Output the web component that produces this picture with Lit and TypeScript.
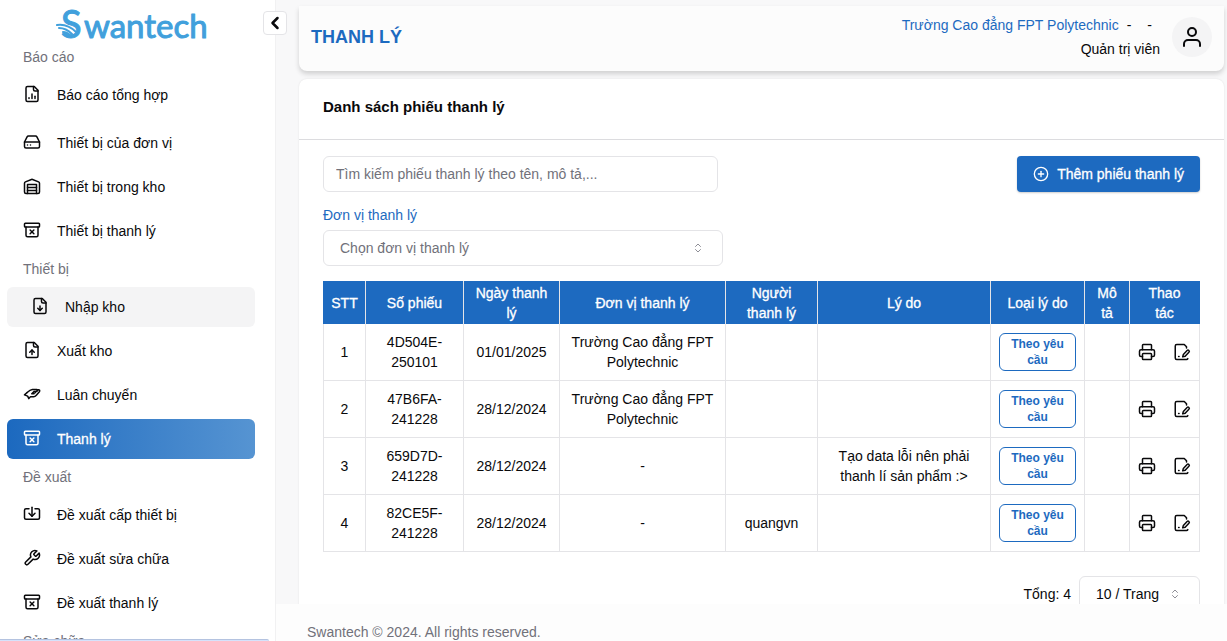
import { LitElement, html, svg, css } from "lit";
import { customElement } from "lit/decorators.js";
import { classMap } from "lit/directives/class-map.js";

const glyphs = {
  report: svg`<path d="M15 2H6a2 2 0 0 0-2 2v16a2 2 0 0 0 2 2h12a2 2 0 0 0 2-2V7Z"/><path d="M14 2v4a2 2 0 0 0 2 2h4"/><path d="M8 18v-1"/><path d="M12 18v-6"/><path d="M16 18v-3"/>`,
  drive: svg`<path d="M22 12H2"/><path d="M5.45 5.11 2 12v6a2 2 0 0 0 2 2h16a2 2 0 0 0 2-2v-6l-3.45-6.89A2 2 0 0 0 16.76 4H7.24a2 2 0 0 0-1.79 1.11z"/><path d="M6 16h.01"/><path d="M10 16h.01"/>`,
  warehouse: svg`<path d="M22 8.35V20a2 2 0 0 1-2 2H4a2 2 0 0 1-2-2V8.35A2 2 0 0 1 3.26 6.5l8-3.2a2 2 0 0 1 1.48 0l8 3.2A2 2 0 0 1 22 8.35Z"/><path d="M6 18h12"/><path d="M6 14h12"/><path d="M6 22V10h12v12"/>`,
  archive: svg`<rect width="20" height="5" x="2" y="3" rx="1"/><path d="M4 8v11a2 2 0 0 0 2 2h12a2 2 0 0 0 2-2V8"/><path d="m9.5 17 5-5"/><path d="m9.5 12 5 5"/>`,
  fileDown: svg`<path d="M15 2H6a2 2 0 0 0-2 2v16a2 2 0 0 0 2 2h12a2 2 0 0 0 2-2V7Z"/><path d="M14 2v4a2 2 0 0 0 2 2h4"/><path d="M12 18v-6"/><path d="m9 15 3 3 3-3"/>`,
  fileUp: svg`<path d="M15 2H6a2 2 0 0 0-2 2v16a2 2 0 0 0 2 2h12a2 2 0 0 0 2-2V7Z"/><path d="M14 2v4a2 2 0 0 0 2 2h4"/><path d="M12 12v6"/><path d="m15 15-3-3-3 3"/>`,
  hand: svg`<path d="M5.500 10 2 13.200l4.200 1.600 1.600 3.400 2.200-2.700h4.200c1.600 0 2.600-.8 3.600-1.900l4-4.600c1.200-1.500.2-3-1.700-2.600l-4.400 4.200"/><path d="M5.500 10c2.600-2.400 4.600-3.800 7-4h6c1.600 0 1.400 2-.2 2.200l-3.300.3-3.300 3.200h3"/>`,
  tray: svg`<path d="M12 3v12"/><path d="m8 11 4 4 4-4"/><path d="M8 5H4a2 2 0 0 0-2 2v10a2 2 0 0 0 2 2h16a2 2 0 0 0 2-2V7a2 2 0 0 0-2-2h-4"/>`,
  wrench: svg`<path d="M14.7 6.3a1 1 0 0 0 0 1.4l1.6 1.6a1 1 0 0 0 1.4 0l3.77-3.77a6 6 0 0 1-7.94 7.94l-6.91 6.91a2.12 2.12 0 0 1-3-3l6.91-6.91a6 6 0 0 1 7.94-7.94l-3.76 3.76z"/>`,
  user: svg`<circle cx="12" cy="7" r="4"/><path d="M20 21v-2a4 4 0 0 0-4-4H8a4 4 0 0 0-4 4v2"/>`,
  plus: svg`<circle cx="12" cy="12" r="10"/><path d="M8 12h8"/><path d="M12 8v8"/>`,
  left: svg`<path d="m15 18-6-6 6-6"/>`,
  sort: svg`<path d="m7 15 5 5 5-5"/><path d="m7 9 5-5 5 5"/>`,
  printer: svg`<path d="M6 18H4a2 2 0 0 1-2-2v-5a2 2 0 0 1 2-2h16a2 2 0 0 1 2 2v5a2 2 0 0 1-2 2h-2"/><path d="M6 9V3a1 1 0 0 1 1-1h10a1 1 0 0 1 1 1v6"/><rect x="6" y="14" width="12" height="8" rx="1"/>`,
  edit: svg`<path d="M18 6.500V5l-3-3H5a2 2 0 0 0-2 2v16a2 2 0 0 0 2 2h13a2 2 0 0 0 1.800-1.200"/><path d="M21.200 12.300a1.400 1.400 0 0 0-2.400-2.400l-5 5.300-.9 3.300 3.300-.9z"/><path d="M7.500 18h.6"/>`,
};

type Glyph = keyof typeof glyphs;

const icon = (name: Glyph, kind = "icon") => html`
  <svg class=${kind} viewBox="0 0 24 24" aria-hidden="true">${glyphs[name]}</svg>
`;

interface Item {
  icon: Glyph;
  label: string;
  state?: "active" | "hover";
}

const menu: { title: string; blocks: Item[][] }[] = [
  {
    title: "Báo cáo",
    blocks: [
      [{ icon: "report", label: "Báo cáo tổng hợp" }],
      [
        { icon: "drive", label: "Thiết bị của đơn vị" },
        { icon: "warehouse", label: "Thiết bị trong kho" },
        { icon: "archive", label: "Thiết bị thanh lý" },
      ],
    ],
  },
  {
    title: "Thiết bị",
    blocks: [
      [
        { icon: "fileDown", label: "Nhập kho", state: "hover" },
        { icon: "fileUp", label: "Xuất kho" },
        { icon: "hand", label: "Luân chuyển" },
        { icon: "archive", label: "Thanh lý", state: "active" },
      ],
    ],
  },
  {
    title: "Đề xuất",
    blocks: [
      [
        { icon: "tray", label: "Đề xuất cấp thiết bị" },
        { icon: "wrench", label: "Đề xuất sửa chữa" },
        { icon: "archive", label: "Đề xuất thanh lý" },
      ],
    ],
  },
  { title: "Sửa chữa", blocks: [] },
];

const base = css`
  * {
    box-sizing: border-box;
  }
  button,
  input,
  select {
    font: inherit;
    color: inherit;
    margin: 0;
  }
  .icon {
    width: 18px;
    height: 18px;
    flex: none;
    fill: none;
    stroke: currentColor;
    stroke-width: 2;
    stroke-linecap: round;
    stroke-linejoin: round;
  }
`;

@customElement("side-menu")
class SideMenu extends LitElement {
  static styles = [
    base,
    css`
      :host {
        display: flex;
        flex-direction: column;
        overflow: hidden;
        background: #fff;
        border-right: 1px solid #f1f1f2;
        padding: 8px 20px 0 7px;
      }
      .logo {
        width: 152px;
        height: 36px;
        margin: 0 0 -5px 49px;
        flex: none;
        overflow: visible;
        fill: #41a0dc;
        stroke: #41a0dc;
        stroke-width: 1;
        stroke-linejoin: round;
        stroke-linecap: round;
        font-family: Lato, sans-serif;
      }
      .swoosh {
        fill: none;
        stroke-width: 2;
      }
      .title {
        margin: 0;
        padding: 8px 16px;
        font-size: 14px;
        font-weight: 400;
        line-height: 20px;
        color: #71717a;
      }
      .blocks {
        display: grid;
        gap: 8px;
      }
      .block {
        display: grid;
        gap: 4px;
        margin: 0;
        padding: 0;
        list-style: none;
      }
      .item {
        display: flex;
        align-items: center;
        gap: 16px;
        height: 40px;
        padding: 0 16px;
        border-radius: 6px;
        color: #09090b;
        text-decoration: none;
      }
      .item .icon {
        margin-bottom: 2px;
      }
      .hover {
        background: #f4f4f5;
        padding-left: 24px;
      }
      .active {
        color: #fff;
        background: linear-gradient(90deg, #1c69bf, #5694d2);
        -webkit-text-stroke: 0.3px currentColor;
      }
    `,
  ];

  render() {
    return html`
      <svg class="logo" viewBox="0 0 152 36" role="img" aria-label="Swantech">
        <text x="5" y="30" font-size="38">S</text>
        <text x="28" y="30" font-size="33">wantech</text>
        <path class="swoosh" d="M1 17c7-1 13 1 19 7M3 20c6 0 9 2 13 6M7 24c3 0 6 2 8 4" />
      </svg>
      <nav>
        ${menu.map(
          (group) => html`
            <h2 class="title">${group.title}</h2>
            <div class="blocks">
              ${group.blocks.map(
                (block) => html`<ul class="block">
                  ${block.map(
                    (item) => html`<li>
                      <a
                        href="#"
                        class=${classMap({
                          item: true,
                          hover: item.state === "hover",
                          active: item.state === "active",
                        })}
                        >${icon(item.icon)}<span>${item.label}</span></a
                      >
                    </li>`
                  )}
                </ul>`
              )}
            </div>
          `
        )}
      </nav>
    `;
  }
}

interface Row {
  code: string;
  date: string;
  unit: string;
  person: string;
  reason: string;
}

const rows: Row[] = [
  { code: "4D504E-250101", date: "01/01/2025", unit: "Trường Cao đẳng FPT Polytechnic", person: "", reason: "" },
  { code: "47B6FA-241228", date: "28/12/2024", unit: "Trường Cao đẳng FPT Polytechnic", person: "", reason: "" },
  { code: "659D7D-241228", date: "28/12/2024", unit: "-", person: "", reason: "Tạo data lỗi nên phải thanh lí sản phẩm :>" },
  { code: "82CE5F-241228", date: "28/12/2024", unit: "-", person: "quangvn", reason: "" },
];

const columns = [
  { label: "STT", width: 42 },
  { label: "Số phiếu", width: 98 },
  { label: "Ngày thanh lý", width: 96 },
  { label: "Đơn vị thanh lý", width: 166 },
  { label: "Người thanh lý", width: 92 },
  { label: "Lý do", width: 173 },
  { label: "Loại lý do", width: 94 },
  { label: "Mô tả", width: 45 },
  { label: "Thao tác", width: 70 },
];

@customElement("liquidation-table")
class LiquidationTable extends LitElement {
  static styles = [
    base,
    css`
      :host {
        display: block;
      }
      table {
        width: 100%;
        table-layout: fixed;
        border-collapse: collapse;
        line-height: 20px;
        text-align: center;
      }
      th {
        height: 42px;
        padding: 0 8px;
        font-weight: 500;
        -webkit-text-stroke: 0.3px currentColor;
        color: #fff;
        background: #1d6ac0;
        border: 1px solid #e4e4e7;
        border-top-color: #1d6ac0;
        border-bottom: 0;
      }
      th:first-child {
        padding: 0 4px;
        border-left-color: #1d6ac0;
      }
      th:last-child {
        border-right-color: #1d6ac0;
      }
      td {
        height: 57px;
        padding: 8px;
        border: 1px solid #e4e4e7;
      }
      tbody tr:first-child td {
        border-top: 0;
      }
      .badge {
        display: block;
        width: 100%;
        padding: 2px 10px;
        border: 1px solid #1d6ac0;
        border-radius: 6px;
        color: #1d6ac0;
        font-size: 12px;
        font-weight: 600;
        line-height: 16px;
      }
      td.type {
        padding: 0 8px;
      }
      .actions {
        display: flex;
        justify-content: space-between;
      }
      .action {
        display: flex;
        padding: 0;
        border: 0;
        background: none;
      }
    `,
  ];

  render() {
    return html`
      <table>
        <colgroup>
          ${columns.map((c) => html`<col style="width:${c.width}px" />`)}
        </colgroup>
        <thead>
          <tr>
            ${columns.map((c) => html`<th scope="col">${c.label}</th>`)}
          </tr>
        </thead>
        <tbody>
          ${rows.map(
            (r, i) => html`<tr>
              <td>${i + 1}</td>
              <td>${r.code}</td>
              <td>${r.date}</td>
              <td>${r.unit}</td>
              <td>${r.person}</td>
              <td>${r.reason}</td>
              <td class="type"><span class="badge">Theo yêu cầu</span></td>
              <td></td>
              <td>
                <div class="actions">
                  <button class="action" aria-label="In phiếu">${icon("printer")}</button>
                  <button class="action" aria-label="Chỉnh sửa">${icon("edit")}</button>
                </div>
              </td>
            </tr>`
          )}
        </tbody>
      </table>
    `;
  }
}

@customElement("app-root")
class AppRoot extends LitElement {
  static styles = [
    base,
    css`
      :host {
        display: grid;
        grid-template-columns: 276px minmax(0, 1fr);
        grid-template-rows: 100vh;
        position: relative;
        overflow: hidden;
        font-family: "Liberation Sans", Arial, sans-serif;
        font-size: 14px;
        line-height: 20px;
        color: #09090b;
        background: #fdfdfd;
      }
      .toggle {
        position: absolute;
        left: 263px;
        top: 11px;
        z-index: 2;
        display: grid;
        place-items: center;
        width: 24px;
        height: 24px;
        padding: 0;
        border: 1px solid #e4e4e7;
        border-radius: 4px;
        background: #fff;
      }
      .toggle .icon {
        width: 20px;
        height: 20px;
        stroke-width: 3;
      }
      .main {
        display: flex;
        flex-direction: column;
      }
      .page {
        flex: 1;
        min-height: 0;
        overflow: hidden;
        padding: 6px 3px 0 23px;
        background: #f8f8f9;
      }
      .header {
        display: flex;
        align-items: center;
        justify-content: space-between;
        height: 65px;
        padding: 0 12px 4px;
        border-radius: 0 0 8px 8px;
        background: #fcfcfc;
        box-shadow: 0 3px 5px rgba(0, 0, 0, 0.16);
      }
      .heading {
        margin: 0;
        font-size: 18px;
        font-weight: 700;
        color: #1d6ac0;
      }
      .account {
        display: flex;
        align-items: center;
        gap: 12px;
      }
      .who {
        line-height: 24px;
        text-align: right;
      }
      .org {
        display: flex;
        gap: 8px;
        padding-right: 8px;
      }
      .org span + span {
        padding-left: 8px;
      }
      .org .school {
        color: #1d6ac0;
      }
      .org .school + span {
        padding-left: 0;
      }
      .avatar {
        display: grid;
        place-items: center;
        width: 40px;
        height: 40px;
        padding: 0;
        border: 0;
        border-radius: 50%;
        background: #f4f4f5;
      }
      .avatar-icon {
        width: 24px;
        height: 24px;
        fill: none;
        stroke: currentColor;
        stroke-width: 2;
        stroke-linecap: round;
      }
      .card {
        margin-top: 8px;
        border-radius: 8px;
        background: #fff;
        box-shadow: 0 0 2px rgba(0, 0, 0, 0.1);
      }
      .card-title {
        margin: 0;
        padding: 16px 24px 20px;
        border-bottom: 1px solid #dcdcdf;
        font-size: 15px;
        font-weight: 600;
        line-height: 24px;
      }
      .body {
        padding: 16px 24px 24px;
      }
      .toolbar {
        display: flex;
        justify-content: space-between;
      }
      .search {
        width: 45%;
        height: 36px;
        padding: 0 12px;
        border: 1px solid #e4e4e7;
        border-radius: 6px;
        background: #fff;
      }
      .search::placeholder {
        color: #71717a;
        opacity: 1;
      }
      .add {
        display: flex;
        align-items: center;
        gap: 8px;
        height: 36px;
        padding: 0 16px;
        border: 0;
        border-radius: 4px;
        color: #fff;
        background: #1d6ac0;
        -webkit-text-stroke: 0.3px currentColor;
        box-shadow: 0 1px 2px rgba(0, 0, 0, 0.2);
      }
      .add-icon,
      .sort-icon {
        width: 16px;
        height: 16px;
        fill: none;
        stroke: currentColor;
        stroke-width: 2;
        stroke-linecap: round;
        stroke-linejoin: round;
      }
      .label {
        display: block;
        margin: 12px 0 4px;
        line-height: 22px;
        color: #1d6ac0;
      }
      .select {
        display: grid;
        align-items: center;
        max-width: 400px;
      }
      .select > * {
        grid-area: 1 / 1;
      }
      .select select {
        width: 100%;
        height: 36px;
        padding: 0 16px;
        border: 1px solid #e4e4e7;
        border-radius: 6px;
        background: #fff;
        appearance: none;
      }
      .select .empty {
        color: #71717a;
      }
      .select .sort-icon {
        justify-self: end;
        width: 12px;
        height: 12px;
        margin-right: 19px;
        color: #8e8e96;
        pointer-events: none;
      }
      liquidation-table {
        margin-top: 15px;
      }
      .pager {
        display: flex;
        align-items: center;
        justify-content: flex-end;
        gap: 8px;
        margin-top: 24px;
      }
      .size {
        width: 121px;
      }
      .footer {
        height: 37px;
        padding: 18px 31px 0;
        color: #71717a;
        background: #fdfdfd;
      }
      .status {
        position: absolute;
        left: 0;
        bottom: 0;
        width: 269px;
        height: 2px;
        border-top: 1px solid #b4c3e0;
        border-radius: 0 4px 0 0;
        background: #d5e2fb;
      }
    `,
  ];

  render() {
    return html`
      <side-menu></side-menu>
      <button class="toggle" aria-label="Thu gọn">${icon("left")}</button>
      <div class="main">
        <main class="page">
          <header class="header">
            <h1 class="heading">THANH LÝ</h1>
            <div class="account">
              <div class="who">
                <div class="org"><span class="school">Trường Cao đẳng FPT Polytechnic</span><span>-</span><span>-</span></div>
                <div>Quản trị viên</div>
              </div>
              <button class="avatar" aria-label="Tài khoản">${icon("user", "avatar-icon")}</button>
            </div>
          </header>
          <section class="card">
            <h2 class="card-title">Danh sách phiếu thanh lý</h2>
            <div class="body">
              <div class="toolbar">
                <input
                  class="search"
                  type="text"
                  aria-label="Tìm kiếm"
                  placeholder="Tìm kiếm phiếu thanh lý theo tên, mô tả,..."
                />
                <button class="add">${icon("plus", "add-icon")}<span>Thêm phiếu thanh lý</span></button>
              </div>
              <label class="label" for="unit">Đơn vị thanh lý</label>
              <div class="select">
                <select id="unit" class="empty">
                  <option>Chọn đơn vị thanh lý</option>
                </select>
                ${icon("sort", "sort-icon")}
              </div>
              <liquidation-table></liquidation-table>
              <div class="pager">
                <label for="size">Tổng: 4</label>
                <div class="select size">
                  <select id="size">
                    <option>10 / Trang</option>
                  </select>
                  ${icon("sort", "sort-icon")}
                </div>
              </div>
            </div>
          </section>
        </main>
        <footer class="footer">Swantech © 2024. All rights reserved.</footer>
      </div>
      <div class="status"></div>
    `;
  }
}
